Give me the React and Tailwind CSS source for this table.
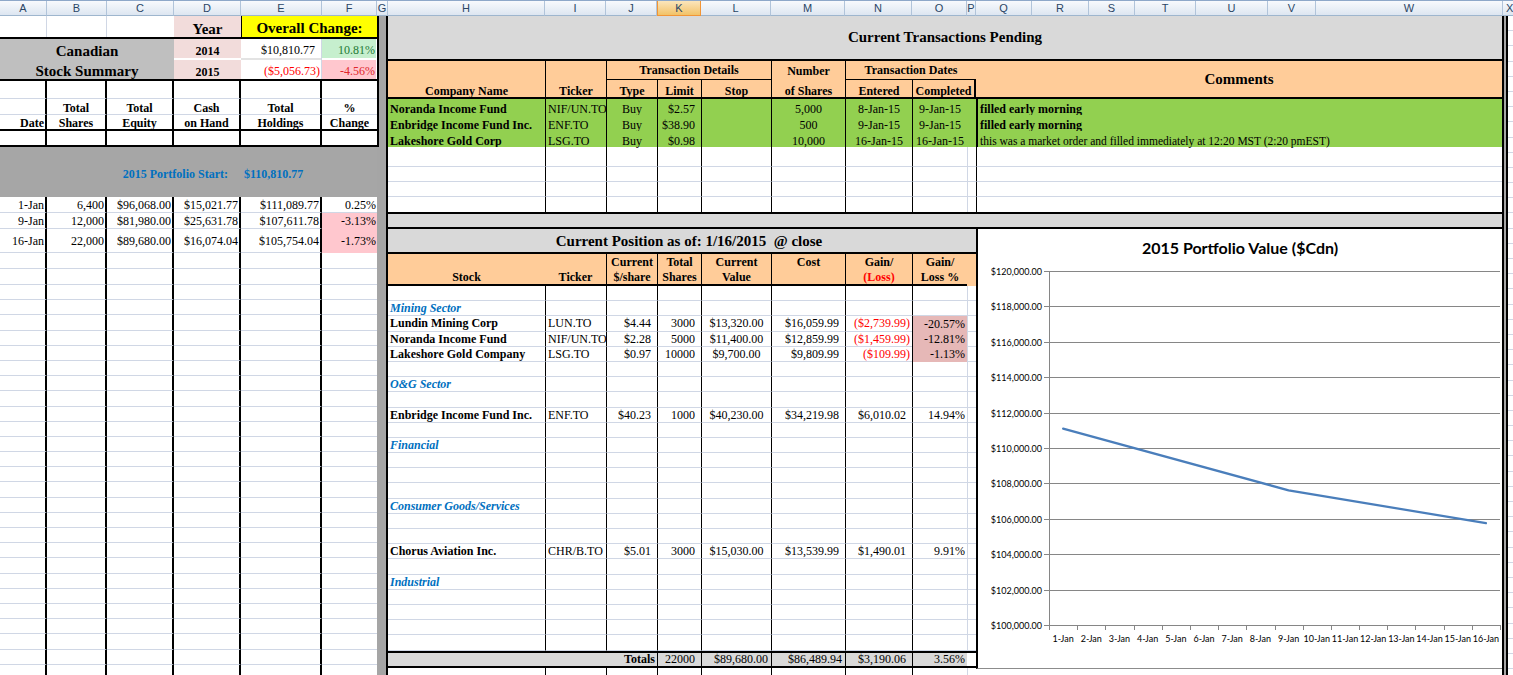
import React from "react";

const HCOLS = [
  ["A", "w-[47px]"], ["B", "w-[60px]"], ["C", "w-[67px]"], ["D", "w-[67px]"], ["E", "w-[81px]"], ["F", "w-[55px]"], ["G", "w-[11px]"],
  ["H", "w-[157px]"], ["I", "w-[61px]"], ["J", "w-[51px]"], ["K", "w-[44px]"], ["L", "w-[70px]"], ["M", "w-[74px]"], ["N", "w-[67px]"],
  ["O", "w-[55px]"], ["P", "w-[9px]"], ["Q", "w-[56px]"], ["R", "w-[57px]"], ["S", "w-[46px]"], ["T", "w-[61px]"], ["U", "w-[72px]"],
  ["V", "w-[48px]"], ["W", "w-[187px]"],
];

function HeaderBar() {
  return (
    <div className="flex h-[16px] shrink-0 border-t border-t-[#8ea8c9] font-['Liberation_Sans',sans-serif] text-[11px] text-[#2a4565]">
      {HCOLS.map(([l, w]) => (
        <div
          key={l}
          className={`${w} shrink-0 h-full flex items-center justify-center border-r border-b ${
            l === "K"
              ? "bg-linear-to-b from-[#fbe5bb] to-[#f2c266] border-r-[#f29536] border-b-[#f29536] border-l border-l-[#f29536]"
              : "bg-linear-to-b from-[#f8fafd] to-[#dde6f1] border-r-[#b1c4da] border-b-[#9eb6ce]"
          }`}
        >
          {l}
        </div>
      ))}
      <div className="flex-1 h-full flex items-center justify-start pl-[3px] overflow-hidden border-b border-b-[#9eb6ce] bg-linear-to-b from-[#f8fafd] to-[#dde6f1]">
        X
      </div>
    </div>
  );
}

const LW = ["w-[47px]", "w-[60px]", "w-[67px]", "w-[67px]", "w-[81px]", "w-[55px]"];

function LeftRow({ h, vals = [], pink = [], bold = false, align = [] }) {
  return (
    <div className={`flex shrink-0 ${h} ${bold ? "font-bold" : ""}`}>
      {LW.map((w, i) => (
        <div
          key={i}
          className={`${w} shrink-0 flex whitespace-nowrap ${align[i] === "c" ? "items-end justify-center" : "items-center justify-end pr-[1px]"} ${
            i < 5 ? "border-r-2 border-r-black" : ""
          } ${pink[i] ? "bg-[#ffc7ce]" : "border-b border-b-[#d0d7e5]"}`}
        >
          {vals[i]}
        </div>
      ))}
    </div>
  );
}

function LeftPanel() {
  const empties = Array.from({ length: 26 });
  return (
    <div className="w-[377px] shrink-0 flex flex-col">
      {/* Row 1 */}
      <div className="flex h-[23px] shrink-0 border-b-2 border-black">
        <div className="w-[47px] shrink-0 border-r border-r-[#d0d7e5]" />
        <div className="w-[60px] shrink-0 border-r border-r-[#d0d7e5]" />
        <div className="w-[67px] shrink-0" />
        <div className="w-[67px] shrink-0 bg-[#f2dcdb] flex items-end justify-center font-bold text-[15px]">Year</div>
        <div className="w-[136px] shrink-0 bg-[#ffff00] border-l border-l-black flex items-end justify-center pb-[1px] font-bold text-[15px]">
          Overall Change:
        </div>
      </div>
      {/* Rows 2-3 */}
      <div className="flex h-[42px] shrink-0 border-b-2 border-black">
        <div className="w-[174px] shrink-0 bg-[#bfbfbf] flex flex-col font-bold text-[15px]">
          <div className="h-[20px] flex items-end justify-center">Canadian</div>
          <div className="flex-1 flex items-end justify-center">Stock Summary</div>
        </div>
        <div className="w-[67px] shrink-0 flex flex-col font-bold">
          <div className="h-[21px] bg-[#f2dcdb] border-b-2 border-b-white flex items-end justify-center pb-[1px]">2014</div>
          <div className="flex-1 bg-[#f2dcdb] flex items-end justify-center pb-[1px]">2015</div>
        </div>
        <div className="w-[81px] shrink-0 flex flex-col border-r border-r-[#d0d7e5]">
          <div className="h-[21px] border-b-2 border-b-[#e3e3e3] flex items-end justify-end pr-[6px] pb-[2px]">$10,810.77</div>
          <div className="flex-1 flex items-end justify-end pr-[1px] pb-[2px] text-[#ff0000]">($5,056.73)</div>
        </div>
        <div className="w-[54px] shrink-0 flex flex-col">
          <div className="h-[21px] bg-[#c6efce] border-b-2 border-b-white flex items-end justify-end pr-[1px] pb-[2px] text-[#1e7a35]">10.81%</div>
          <div className="flex-1 bg-[#ffc7ce] flex items-end justify-end pr-[1px] pb-[2px] text-[#e0262a]">-4.56%</div>
        </div>
      </div>
      {/* Header rows 4-6 */}
      <div className="flex flex-col h-[50px] shrink-0 border-b-2 border-black font-bold">
        <LeftRow h="h-[18px]" />
        <LeftRow h="h-[16px]" vals={["", "Total", "Total", "Cash", "Total", "%"]} align={["r", "c", "c", "c", "c", "c"]} />
        <div className="flex flex-1">
          {LW.map((w, i) => (
            <div
              key={i}
              className={`${w} shrink-0 flex items-end whitespace-nowrap ${i === 0 ? "justify-end pr-[1px]" : "justify-center"} ${i < 5 ? "border-r-2 border-r-black" : ""}`}
            >
              {["Date", "Shares", "Equity", "on Hand", "Holdings", "Change"][i]}
            </div>
          ))}
        </div>
      </div>
      {/* Row 7 */}
      <div className="flex h-[16px] shrink-0 border-b-2 border-black">
        {LW.map((w, i) => (
          <div key={i} className={`${w} shrink-0 ${i < 5 ? "border-r-2 border-r-black" : ""}`} />
        ))}
      </div>
      {/* Portfolio start band */}
      <div className="h-[50px] shrink-0 bg-[#a6a6a6] flex items-center pt-[3px] font-bold text-[#0070c0]">
        <span className="w-[244px] shrink-0 text-right pr-[16px]">2015 Portfolio Start:</span>
        <span>$110,810.77</span>
      </div>
      <LeftRow h="h-[16px]" vals={["1-Jan", "6,400", "$96,068.00", "$15,021.77", "$111,089.77", "0.25%"]} />
      <LeftRow h="h-[16px]" vals={["9-Jan", "12,000", "$81,980.00", "$25,631.78", "$107,611.78", "-3.13%"]} pink={[0, 0, 0, 0, 0, 1]} />
      <LeftRow h="h-[24px]" vals={["16-Jan", "22,000", "$89,680.00", "$16,074.04", "$105,754.04", "-1.73%"]} pink={[0, 0, 0, 0, 0, 1]} />
      <LeftRow h="h-[16px]" />
      <LeftRow h="h-[16px]" />
      {empties.map((_, i) => (
        <LeftRow key={i} h="h-[15.2px]" />
      ))}
    </div>
  );
}

const TX = [
  ["Noranda Income Fund", "NIF/UN.TO", "Buy", "$2.57", "5,000", "8-Jan-15", "9-Jan-15", "filled early morning", true],
  ["Enbridge Income Fund Inc.", "ENF.TO", "Buy", "$38.90", "500", "9-Jan-15", "9-Jan-15", "filled early morning", true],
  ["Lakeshore Gold Corp", "LSG.TO", "Buy", "$0.98", "10,000", "16-Jan-15", "16-Jan-15", "this was a market order and filled immediately at 12:20 MST (2:20 pmEST)", false],
];

function TxWhiteRow({ h, last }) {
  const b = last ? "" : "border-b border-b-[#d0d7e5]";
  return (
    <div className={`flex shrink-0 ${h} ${last ? "border-b-2 border-black" : ""}`}>
      <div className={`w-[157px] shrink-0 ${b}`} />
      <div className={`w-[61px] shrink-0 border-l border-l-black ${b}`} />
      <div className={`w-[51px] shrink-0 border-l border-l-black ${b}`} />
      <div className={`w-[44px] shrink-0 border-l border-l-black ${b}`} />
      <div className={`w-[70px] shrink-0 border-l border-l-black ${b}`} />
      <div className={`w-[74px] shrink-0 border-l border-l-black ${b}`} />
      <div className={`w-[67px] shrink-0 border-l border-l-black ${b}`} />
      <div className={`w-[55px] shrink-0 border-l border-l-black ${b}`} />
      <div className={`w-[9px] shrink-0 border-l border-l-[#d0d7e5] ${b}`} />
      <div className={`w-[526px] shrink-0 border-l border-l-black ${b}`} />
    </div>
  );
}

function Transactions() {
  return (
    <div className="flex flex-col shrink-0">
      <div className="h-[43px] shrink-0 bg-[#d9d9d9] flex items-center justify-center font-bold text-[15px]">
        Current Transactions Pending
      </div>
      <div className="h-[40px] shrink-0 flex bg-[#ffcc99] border-y-2 border-black font-bold">
        <div className="w-[157px] shrink-0 flex items-end justify-center">Company Name</div>
        <div className="w-[61px] shrink-0 border-l border-black flex items-end justify-center">Ticker</div>
        <div className="w-[165px] shrink-0 border-l border-black flex flex-col">
          <div className="h-[19px] shrink-0 border-b border-black flex items-center justify-center">Transaction Details</div>
          <div className="flex-1 flex">
            <div className="w-[50px] shrink-0 flex items-end justify-center">Type</div>
            <div className="w-[44px] shrink-0 border-l border-black flex items-end justify-center">Limit</div>
            <div className="flex-1 border-l border-black flex items-end justify-center">Stop</div>
          </div>
        </div>
        <div className="w-[74px] shrink-0 border-l border-black flex flex-col">
          <div className="h-[19px] shrink-0 flex items-center justify-center">Number</div>
          <div className="flex-1 flex items-end justify-center">of Shares</div>
        </div>
        <div className="w-[131px] shrink-0 border-l border-black flex flex-col">
          <div className="h-[19px] shrink-0 border-b border-black flex items-center justify-center">Transaction Dates</div>
          <div className="flex-1 flex">
            <div className="w-[66px] shrink-0 flex items-end justify-center">Entered</div>
            <div className="flex-1 border-l border-black border-r-2 border-r-black flex items-end justify-center">Completed</div>
          </div>
        </div>
        <div className="w-[526px] shrink-0 flex items-center justify-center text-[15px]">Comments</div>
      </div>
      {TX.map((r) => (
        <div key={r[0]} className="flex h-[16px] shrink-0 bg-[#92d050]">
          <div className="w-[157px] shrink-0 pl-[2px] flex items-end font-bold whitespace-nowrap overflow-hidden">{r[0]}</div>
          <div className="w-[61px] shrink-0 border-l border-black pl-[2px] flex items-end whitespace-nowrap overflow-hidden">{r[1]}</div>
          <div className="w-[51px] shrink-0 border-l border-black flex items-end justify-center">{r[2]}</div>
          <div className="w-[44px] shrink-0 border-l border-black flex items-end justify-end pr-[6px]">{r[3]}</div>
          <div className="w-[70px] shrink-0 border-l border-black" />
          <div className="w-[74px] shrink-0 border-l border-black flex items-end justify-center">{r[4]}</div>
          <div className="w-[67px] shrink-0 border-l border-black flex items-end justify-center">{r[5]}</div>
          <div className="w-[55px] shrink-0 border-l border-black flex items-end justify-center">{r[6]}</div>
          <div className="w-[9px] shrink-0" />
          <div className={`w-[526px] shrink-0 border-l-2 border-black pl-[2px] flex items-end whitespace-nowrap ${r[8] ? "font-bold" : "text-[11.5px]"}`}>{r[7]}</div>
        </div>
      ))}
      <TxWhiteRow h="h-[20px]" />
      <TxWhiteRow h="h-[15px]" />
      <TxWhiteRow h="h-[15px]" />
      <TxWhiteRow h="h-[17px]" last />
    </div>
  );
}

const POS = [
  {},
  { s: "Mining Sector" },
  { n: "Lundin Mining Corp", t: "LUN.TO", p: "$4.44", q: "3000", v: "$13,320.00", c: "$16,059.99", g: "($2,739.99)", pct: "-20.57%", neg: true },
  { n: "Noranda Income Fund", t: "NIF/UN.TO", p: "$2.28", q: "5000", v: "$11,400.00", c: "$12,859.99", g: "($1,459.99)", pct: "-12.81%", neg: true },
  { n: "Lakeshore Gold Company", t: "LSG.TO", p: "$0.97", q: "10000", v: "$9,700.00", c: "$9,809.99", g: "($109.99)", pct: "-1.13%", neg: true },
  {},
  { s: "O&G Sector" },
  {},
  { n: "Enbridge Income Fund Inc.", t: "ENF.TO", p: "$40.23", q: "1000", v: "$40,230.00", c: "$34,219.98", g: "$6,010.02", pct: "14.94%" },
  {},
  { s: "Financial" },
  {},
  {},
  {},
  { s: "Consumer Goods/Services" },
  {},
  {},
  { n: "Chorus Aviation Inc.", t: "CHR/B.TO", p: "$5.01", q: "3000", v: "$15,030.00", c: "$13,539.99", g: "$1,490.01", pct: "9.91%" },
  {},
  { s: "Industrial" },
  {},
  {},
  {},
  {},
];

function PosRow({ r }) {
  const b = "border-b border-b-[#d0d7e5]";
  return (
    <div className="flex h-[15.2px] shrink-0">
      <div className={`w-[157px] shrink-0 ${b} pl-[2px] flex items-center whitespace-nowrap overflow-hidden font-bold ${r.s ? "italic text-[#0070c0]" : ""}`}>
        {r.s || r.n}
      </div>
      <div className={`w-[61px] shrink-0 ${b} border-l border-l-black pl-[2px] flex items-center whitespace-nowrap overflow-hidden`}>{r.t}</div>
      <div className={`w-[51px] shrink-0 ${b} border-l border-l-black pr-[6px] flex items-center justify-end`}>{r.p}</div>
      <div className={`w-[44px] shrink-0 ${b} border-l border-l-black pr-[6px] flex items-center justify-end`}>{r.q}</div>
      <div className={`w-[70px] shrink-0 ${b} border-l border-l-black flex items-center justify-center`}>{r.v}</div>
      <div className={`w-[74px] shrink-0 ${b} border-l border-l-black pr-[6px] flex items-center justify-end`}>{r.c}</div>
      <div className={`w-[67px] shrink-0 ${b} border-l border-l-black flex items-center justify-end whitespace-nowrap ${r.neg ? "pr-[2px] text-[#ff0000]" : "pr-[6px]"}`}>{r.g}</div>
      <div className={`w-[55px] shrink-0 border-l border-l-black pr-[2px] flex items-center justify-end ${r.neg ? "bg-[#e6b8b7]" : b}`}>{r.pct}</div>
      <div className={`w-[9px] shrink-0 ${b} border-l border-l-[#d0d7e5]`} />
    </div>
  );
}

function TwoLine({ w, a, b }) {
  return (
    <div className={`${w} shrink-0 border-l border-black flex flex-col`}>
      <div className="h-[15px] shrink-0 flex items-center justify-center">{a}</div>
      <div className="flex-1 flex items-center justify-center">{b}</div>
    </div>
  );
}

function Position() {
  return (
    <div className="w-[588px] shrink-0 flex flex-col">
      <div className="h-[25px] shrink-0 bg-[#d9d9d9] border-b-2 border-black flex items-center justify-center pl-[14px] pt-[2px] font-bold text-[15px] whitespace-pre">
        Current Position as of: 1/16/2015  @ close
      </div>
      <div className="flex h-[32px] shrink-0 bg-[#ffcc99] font-bold">
        <div className="flex w-[579px] shrink-0 border-b-2 border-black">
          <div className="w-[157px] shrink-0 flex items-end justify-center pb-[1px]">Stock</div>
          <div className="w-[61px] shrink-0 flex items-end justify-center pb-[1px]">Ticker</div>
          <TwoLine w="w-[51px]" a="Current" b="$/share" />
          <TwoLine w="w-[44px]" a="Total" b="Shares" />
          <TwoLine w="w-[70px]" a="Current" b="Value" />
          <TwoLine w="w-[74px]" a="Cost" b="" />
          <TwoLine w="w-[67px]" a="Gain/" b={<span className="text-[#ff0000]">(Loss)</span>} />
          <TwoLine w="w-[55px]" a="Gain/" b="Loss %" />
        </div>
        <div className="w-[9px] shrink-0" />
      </div>
      {POS.map((r, i) => (
        <PosRow key={i} r={r} />
      ))}
      <div className="flex h-[17px] shrink-0 border-y-2 border-black">
        <div className="w-[269px] shrink-0 bg-[#d9d9d9] flex items-center justify-end pr-[2px] font-bold">Totals</div>
        <div className="w-[44px] shrink-0 bg-[#d9d9d9] border-l border-black flex items-center justify-end pr-[6px]">22000</div>
        <div className="w-[70px] shrink-0 bg-[#d9d9d9] border-l border-black flex items-center justify-end pr-[3px]">$89,680.00</div>
        <div className="w-[74px] shrink-0 bg-[#d9d9d9] border-l border-black flex items-center justify-end pr-[3px]">$86,489.94</div>
        <div className="w-[67px] shrink-0 bg-[#d9d9d9] border-l border-black flex items-center justify-end pr-[6px]">$3,190.06</div>
        <div className="w-[55px] shrink-0 bg-[#d9d9d9] border-l border-black flex items-center justify-end pr-[2px]">3.56%</div>
        <div className="w-[9px] shrink-0 bg-white" />
      </div>
      <PosRow r={{}} />
    </div>
  );
}

const YLABELS = ["$120,000.00", "$118,000.00", "$116,000.00", "$114,000.00", "$112,000.00", "$110,000.00", "$108,000.00", "$106,000.00", "$104,000.00", "$102,000.00", "$100,000.00"];
const DAYS = Array.from({ length: 16 }, (_, i) => `${i + 1}-Jan`);

function Chart() {
  const x0 = 71;
  const x1 = 522;
  const yT = 4;
  const yB = 358;
  const step = (yB - yT) / 10;
  const cw = (x1 - x0) / 16;
  const yv = (v) => yB - ((v - 100000) / 20000) * (yB - yT);
  const pts = [
    [0, 111089.77],
    [8, 107611.78],
    [15, 105754.04],
  ]
    .map(([k, v]) => `${(x0 + (k + 0.5) * cw).toFixed(1)},${yv(v).toFixed(1)}`)
    .join(" ");
  return (
    <div className="w-[526px] h-[440px] shrink-0 border-l-2 border-black border-b border-b-[#8c8c8c] bg-white flex flex-col">
      <div className="h-[38px] shrink-0 flex items-center justify-center font-['Lato',sans-serif] font-bold text-[16px]">
        2015 Portfolio Value ($Cdn)
      </div>
      <svg width="524" height="401" viewBox="0 0 524 401" className="block" fontFamily="Lato, sans-serif">
        {YLABELS.map((l, i) => {
          const y = Math.round(yT + i * step) + 0.5;
          return (
            <g key={l}>
              <line x1={x0 - 5} x2={x1} y1={y} y2={y} stroke="#868686" strokeWidth="1" />
              <text x={x0 - 7} y={y} fontSize="9" textAnchor="end" dominantBaseline="central" fill="#000">
                {l}
              </text>
            </g>
          );
        })}
        <line x1={x0 + 0.5} x2={x0 + 0.5} y1={yT} y2={yB + 1} stroke="#868686" strokeWidth="1" />
        {Array.from({ length: 17 }).map((_, k) => {
          const x = Math.round(x0 + k * cw) + 0.5;
          return <line key={k} x1={x} x2={x} y1={yB} y2={yB + 5} stroke="#868686" strokeWidth="1" />;
        })}
        {DAYS.map((d, k) => (
          <text key={d} x={x0 + (k + 0.5) * cw} y={371} fontSize="9" textAnchor="middle" dominantBaseline="central" fill="#000">
            {d}
          </text>
        ))}
        <polyline points={pts} fill="none" stroke="#4a7ebb" strokeWidth="2.25" strokeLinejoin="round" strokeLinecap="round" />
      </svg>
    </div>
  );
}

export default function App() {
  const sliver = Array.from({ length: 44 });
  return (
    <div className="w-[1513px] h-[675px] overflow-hidden bg-white text-black text-[12px] leading-none font-['Liberation_Serif',serif] flex flex-col">
      <HeaderBar />
      <div className="flex h-[659px] overflow-hidden">
        <LeftPanel />
        <div className="w-[9px] shrink-0 bg-[#a5a5a5] flex flex-col">
          <div className="h-[131px] border-l-2 border-black" />
        </div>
        <div className="w-[1118px] shrink-0 border-x-2 border-black flex flex-col">
          <Transactions />
          <div className="h-[15px] shrink-0 bg-[#d9d9d9] border-b-2 border-black" />
          <div className="flex flex-1 min-h-0">
            <Position />
            <Chart />
          </div>
        </div>
        <div className="w-[2px] shrink-0 bg-[#a5a5a5]" />
        <div className="w-[2px] shrink-0 bg-black" />
        <div className="flex-1 flex flex-col">
          {sliver.map((_, i) => (
            <div key={i} className="h-[15.2px] shrink-0 border-b border-b-[#d0d7e5]" />
          ))}
        </div>
      </div>
    </div>
  );
}
